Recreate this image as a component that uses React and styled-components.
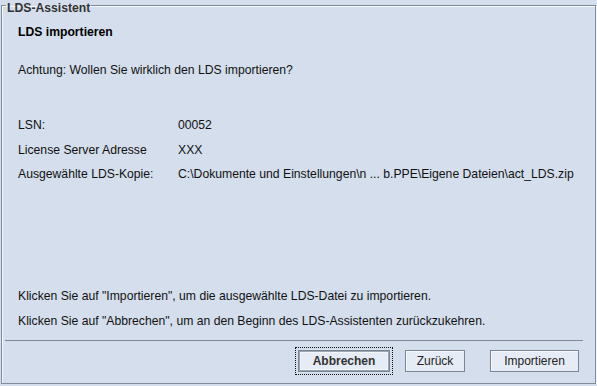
import React from 'react';
import styled, { createGlobalStyle } from 'styled-components';

const GlobalStyle = createGlobalStyle`
html, body {
    margin: 0;
    padding: 0;
    background: #d4deec;
}
body {
    font-family: "Liberation Sans", Arial, sans-serif;
    font-size: 12.2px;
    color: #000;
}
`

const rows = [
    { label: 'LSN:', value: '00052' },
    { label: 'License Server Adresse', value: 'XXX' },
    { label: 'Ausgewählte LDS-Kopie:', value: 'C:\\Dokumente und Einstellungen\\n ... b.PPE\\Eigene Dateien\\act_LDS.zip' },
];

export default () => (
    <>
        <GlobalStyle />
        <Frame>

            <Legend>LDS-Assistent</Legend>

            <Body>

                <Title>LDS importieren</Title>

                <Line style={{ marginTop: 24 }}>Achtung: Wollen Sie wirklich den LDS importieren?</Line>

                <InfoGrid>
                    {rows.map(row => (
                        <React.Fragment key={row.label}>
                            <Line>{row.label}</Line>
                            <Line>{row.value}</Line>
                        </React.Fragment>
                    ))}
                </InfoGrid>

                <Spacer />

                <Line>Klicken Sie auf "Importieren", um die ausgewählte LDS-Datei zu importieren.</Line>
                <Line style={{ marginTop: 11 }}>Klicken Sie auf "Abbrechen", um an den Beginn des LDS-Assistenten zurückzukehren.</Line>

                <Separator />

                <ButtonBar>
                    <Button $default $width={92}>Abbrechen</Button>
                    <Button $width={60} $gap={15}>Zurück</Button>
                    <Button $width={89} $gap={25}>Importieren</Button>
                </ButtonBar>

            </Body>

        </Frame>
    </>
);

const Frame = styled.fieldset`
box-sizing: border-box;
margin: 0 0 0 1px;
padding: 0;
width: 595px;
height: 384px;
min-width: 0;
border: 1px solid #7f8b98;
box-shadow: inset 1px 1px 0 #f4f7fb, 1px 1px 0 #f4f7fb;
display: flex;
flex-direction: column;
`
const Legend = styled.legend`
margin-left: 4px;
padding: 0 1px;
font-weight: bold;
font-size: 12.2px;
line-height: 10px;
color: #333;
transform: translateY(3px);
`
const Body = styled.div`
flex: 1;
display: flex;
flex-direction: column;
padding: 15px 16px 11px 16px;
min-height: 0;
`
const Title = styled.div`
font-weight: bold;
line-height: 14px;
color: #000;
`
const Line = styled.div`
line-height: 14px;
white-space: nowrap;
color: #111;
`
const InfoGrid = styled.div`
margin-top: 41px;
display: grid;
grid-template-columns: 160px auto;
row-gap: 10.5px;
`
const Spacer = styled.div`
flex: 1;
`
const Separator = styled.div`
margin: 12px -4px 0 -13px;
height: 1px;
background: #7d8996;
`
const ButtonBar = styled.div`
margin-top: 9px;
display: flex;
justify-content: flex-end;
`
const Button = styled.button`
box-sizing: border-box;
width: ${p => p.$width}px;
height: 22px;
margin: 0 0 0 ${p => p.$gap || 0}px;
padding: 0;
font-family: "Liberation Sans", Arial, sans-serif;
font-size: 12px;
font-weight: ${p => p.$default ? 'bold' : 'normal'};
color: ${p => p.$default ? '#333' : '#222'};
background: #e6ecf5;
border: 1px solid #7a8693;
box-shadow: ${p => p.$default ? 'inset 0 0 0 1px #9aa6b3, inset 0 0 0 2px #f2f5fa' : 'inset 1px 1px 0 #f7f9fc'};
outline: ${p => p.$default ? '1px dotted #111' : 'none'};
outline-offset: 2px;
`
